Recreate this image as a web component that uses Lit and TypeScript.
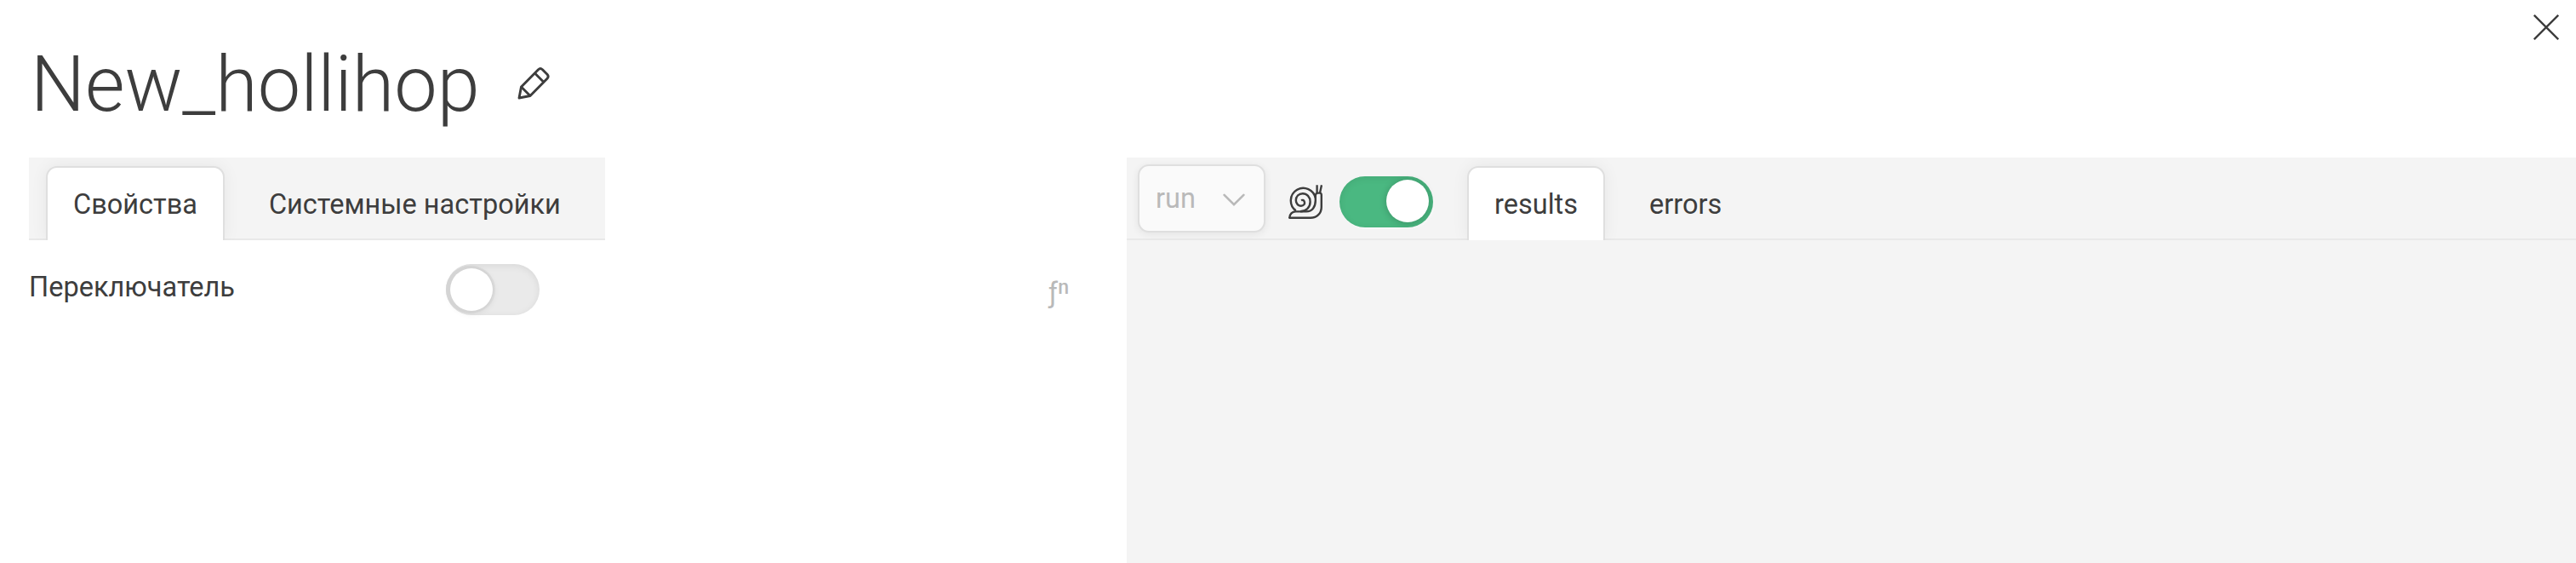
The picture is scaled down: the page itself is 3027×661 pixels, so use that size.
import { LitElement, html, css } from "lit";
import { customElement, property } from "lit/decorators.js";

@customElement("ui-switch")
class UiSwitch extends LitElement {
  @property({ type: Boolean, reflect: true }) on = false;

  static styles = css`
    :host { display: block; flex: none; }
    .track {
      box-sizing: border-box; display: flex; width: 110px; height: 60px; padding: 5px;
      border-radius: 30px; background: #eaeaea;
      box-shadow: inset 0 2px 8px rgba(0, 0, 0, 0.08), 2px 2px 2px rgba(255, 255, 255, 0.5);
    }
    .knob {
      width: 50px; height: 50px; border-radius: 50%; background: #fff;
      box-shadow: -2px 0 0 3px #d4d4d4, 0 0 0 3px #dadada, 0 2px 8px rgba(0, 0, 0, 0.1);
    }
    .track.on { justify-content: flex-end; padding-top: 4px; background: #4ab881; }
    .on .knob { box-shadow: 0 1px 8px rgba(0, 0, 0, 0.22); }
  `;

  render() {
    return html`<div class="track ${this.on ? "on" : ""}"><div class="knob"></div></div>`;
  }
}

@customElement("ui-tab")
class UiTab extends LitElement {
  @property({ type: Boolean, reflect: true }) active = false;

  static styles = css`
    :host {
      box-sizing: border-box; display: block; height: 87px; flex: none; padding: 0 30px;
      border: 2px solid transparent; border-bottom: 0; border-radius: 13px 13px 0 0;
      line-height: 86px; white-space: nowrap;
    }
    :host([active]) {
      background: #fff; border-color: #dfdfdf;
      box-shadow: 0 0 20px rgba(0, 0, 0, 0.06);
      clip-path: inset(-10px -24px 0 -20px);
    }
  `;

  render() {
    return html`<slot></slot>`;
  }
}

@customElement("app-root")
class AppRoot extends LitElement {
  static styles = css`
    :host {
      display: flex; flex-direction: column; box-sizing: border-box; height: 661px;
      overflow: hidden; background: #fff; color: #3d3d3d;
      font: 400 32.5px/40px Roboto, sans-serif;
    }
    svg { display: block; flex: none; fill: none; stroke: currentColor; }
    .head { display: flex; height: 185px; flex: none; justify-content: space-between; }
    .title { display: flex; align-items: center; gap: 43px; height: 196px; padding-left: 36px; }
    h1 { margin: 4px 0 0; font-size: 90px; font-weight: 300; line-height: 106px; }
    .close { margin: 17px 20px 0 0; }
    .body { display: flex; flex: 1; }
    .left { box-sizing: border-box; width: 1324px; padding-left: 34px; }
    .right { flex: 1; background: #f4f4f4; }
    .bar {
      box-sizing: border-box; display: flex; height: 97px; padding: 10px 20px 0;
      background: #f4f4f4; box-shadow: inset 0 -2px #e9e9e9; gap: 20px;
    }
    .left .bar { width: 677px; }
    .right .bar { padding: 0 13px; gap: 0; }
    .right .tabs { display: flex; gap: 20px; padding: 10px 0 0 40px; }
    .run {
      box-sizing: border-box; display: flex; align-items: center; justify-content: space-between;
      width: 150px; height: 80px; margin-top: 8px; padding: 0 22px 0 19px; color: #b9b9b9;
      border: 2px solid #dfdfdf; border-radius: 13px; background: #fafafa;
      box-shadow: 0 2px 10px rgba(0, 0, 0, 0.07);
    }
    .run span { margin-top: -1px; }
    .run svg { margin-top: 4px; }
    .snail { margin: 32px 20px 0 27px; }
    .bar ui-switch { margin-top: 22px; }
    .row { display: flex; width: 1222px; height: 116px; align-items: flex-start; }
    .label { width: 490px; padding-top: 35px; }
    .row ui-switch { margin-top: 28px; }
    .fn { display: flex; margin: 42px 0 0 auto; color: #b9b9b9; }
    .fn .pow { font-size: 23px; font-weight: 500; line-height: 28px; }
  `;

  render() {
    return html`
      <div class="head">
        <div class="title">
          <h1>New_hollihop</h1>
          <svg width="40" height="40" viewBox="0 0 40 40" stroke-width="2.9" stroke-linejoin="round">
            <path d="M3 37 5.5 24 25.5 3.7Q28 1.4 30.5 3.7L36 9.3Q38.3 11.8 36 14.3L16 34.5Z" />
            <path d="M5.5 24 16 34.5M21.5 8 32 18.5" />
          </svg>
        </div>
        <svg class="close" width="30" height="30" viewBox="0 0 30 30" stroke-width="2.4">
          <path d="M.8.8 29.2 29.2M29.2.8.8 29.2" />
        </svg>
      </div>
      <div class="body">
        <div class="left">
          <div class="bar">
            <ui-tab active>Свойства</ui-tab>
            <ui-tab>Системные настройки</ui-tab>
          </div>
          <div class="row">
            <div class="label">Переключатель</div>
            <ui-switch></ui-switch>
            <div class="fn"><span>ƒ</span><span class="pow">n</span></div>
          </div>
        </div>
        <div class="right">
          <div class="bar">
            <div class="run">
              <span>run</span>
              <svg width="26" height="16" viewBox="0 0 26 16" stroke-width="2.6" stroke-linecap="round">
                <path d="M1.6 1.8 13 13.2 24.4 1.8" />
              </svg>
            </div>
            <svg class="snail" width="40" height="40" viewBox="0 0 40 40" stroke-width="2.4" stroke-linejoin="round">
              <path d="M8.7 30.2A14.6 14.6 0 1 1 31.8 16V18.5C31.8 26 28 31.4 21 31.4H9C4.5 31.2 1.3 34.4 1.2 38.8H26C33.5 38.8 38.8 33.5 38.8 26V12Q38.8 9.6 36.8 9.6H34.6Q31.8 9.8 31.8 12.5V17" />
              <path d="M14 31.2C20.5 31.2 25.6 26.5 25.6 20C25.6 14.2 21.6 10.2 16.8 10.2C12 10.2 8.8 13.8 8.8 18C8.8 22 11.6 24.8 14.8 24.8C18 24.8 19.8 22.2 18.6 19.4C18 18 16.5 17.5 15 18.2" />
              <path d="M33.6 .3V9.5M39 .3 37 9.5" />
            </svg>
            <ui-switch on></ui-switch>
            <div class="tabs">
              <ui-tab active>results</ui-tab>
              <ui-tab>errors</ui-tab>
            </div>
          </div>
        </div>
      </div>
    `;
  }
}
